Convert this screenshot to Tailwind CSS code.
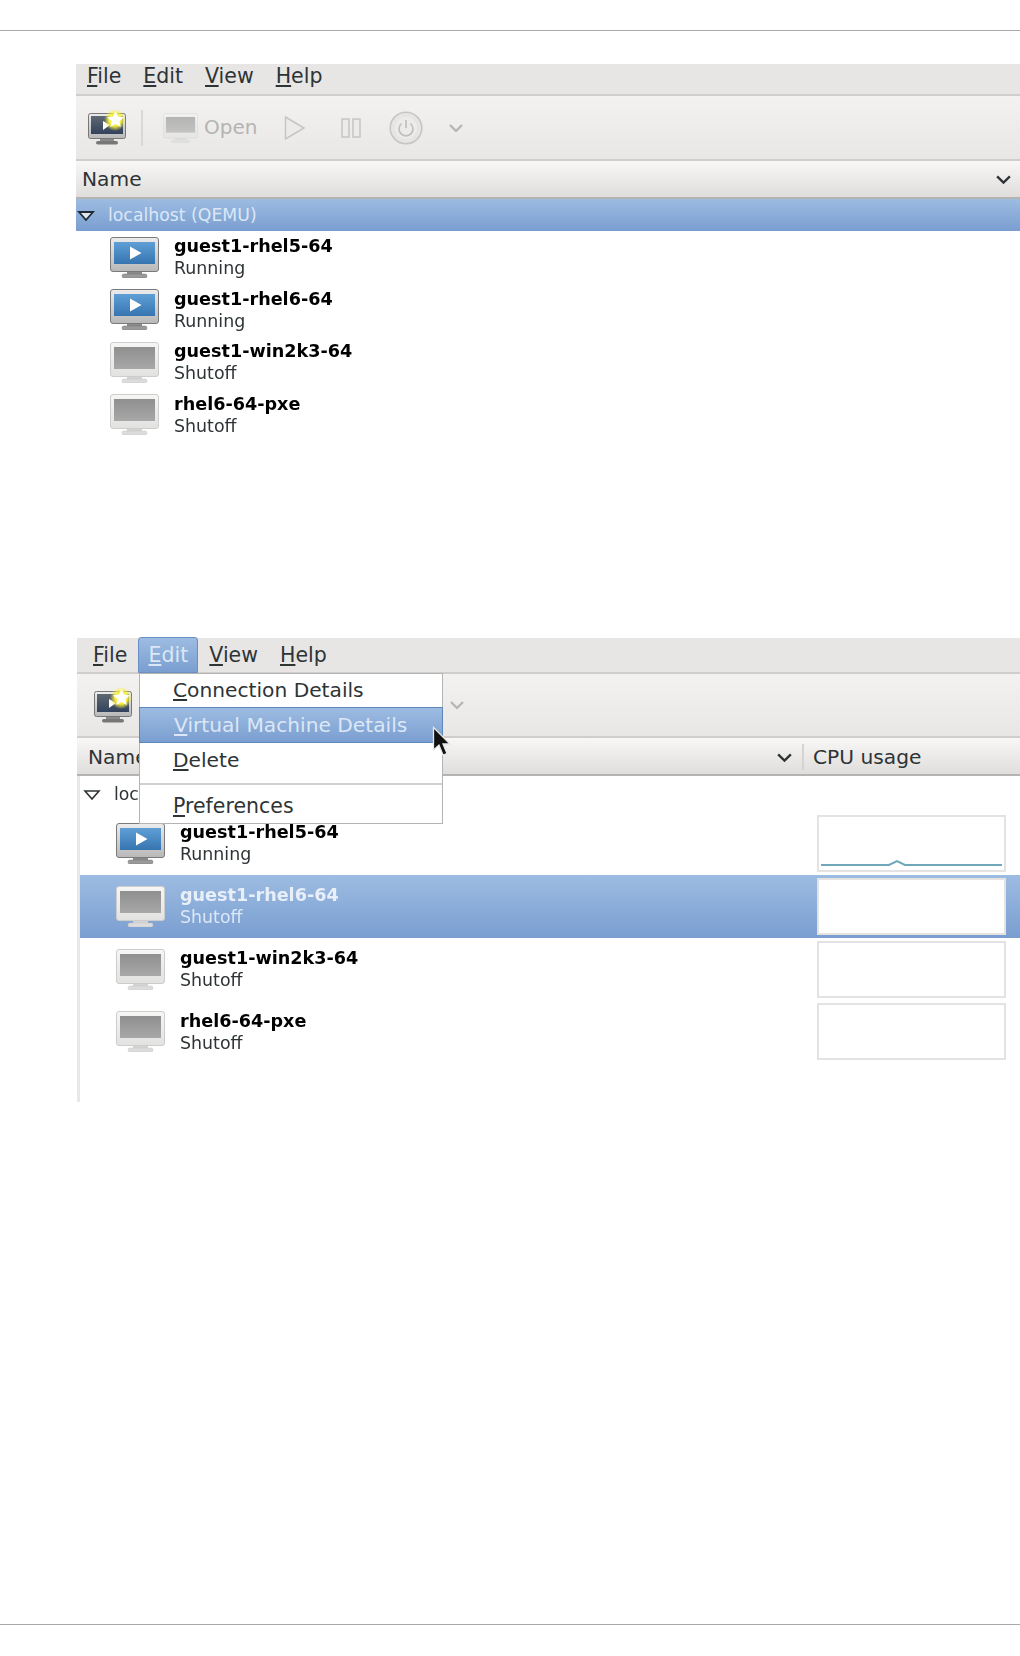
<!DOCTYPE html>
<html lang="en">
<head>
<meta charset="UTF-8">
<title>Virtual Machine Manager</title>
<script src="https://cdn.jsdelivr.net/npm/@tailwindcss/browser@4"></script>
</head>
<body class="bg-white font-['DejaVu_Sans',sans-serif] text-[#2e3436] w-[1020px] h-[1656px] overflow-hidden">

<!-- shared icons -->
<svg class="absolute w-0 h-0">
  <defs>
    <linearGradient id="blue" x1="0" y1="0" x2="0" y2="1"><stop offset="0" stop-color="#5f9fd6"/><stop offset="1" stop-color="#3675b0"/></linearGradient>
    <linearGradient id="bezelOn" x1="0" y1="0" x2="0" y2="1"><stop offset="0" stop-color="#ececec"/><stop offset="1" stop-color="#b8b8b8"/></linearGradient>
    <linearGradient id="bezelOff" x1="0" y1="0" x2="0" y2="1"><stop offset="0" stop-color="#f6f6f5"/><stop offset="1" stop-color="#e2e2e1"/></linearGradient>
    <linearGradient id="greyScreen" x1="0" y1="0" x2="0" y2="1"><stop offset="0" stop-color="#8f8f8f"/><stop offset="1" stop-color="#a8a8a8"/></linearGradient>
    <linearGradient id="dark" x1="0" y1="0" x2="0" y2="1"><stop offset="0" stop-color="#5f6873"/><stop offset="1" stop-color="#33435c"/></linearGradient>
    <radialGradient id="glow"><stop offset="0.55" stop-color="#f6ee3c"/><stop offset="1" stop-color="#f6ee3c" stop-opacity="0"/></radialGradient>
    <symbol id="vm-on" viewBox="0 0 49 41">
      <rect x="17" y="34" width="15" height="3" fill="#8a8a8a"/>
      <rect x="12" y="37" width="25" height="4" rx="2" fill="#9a9a9a" stroke="#777" stroke-width="0.5"/>
      <rect x="0.5" y="0.5" width="48" height="34" rx="2.5" fill="url(#bezelOn)" stroke="#7a7a7a"/>
      <rect x="4" y="5" width="41" height="22" fill="url(#blue)"/>
      <path d="M20 9.5 L31.5 16 L20 22.5 Z" fill="#fff"/>
    </symbol>
    <symbol id="vm-off" viewBox="0 0 49 41">
      <rect x="17" y="34" width="15" height="3" fill="#d4d4d4"/>
      <rect x="12" y="37" width="25" height="4" rx="2" fill="#dcdcdc" stroke="#c6c6c6" stroke-width="0.5"/>
      <rect x="0.5" y="0.5" width="48" height="34" rx="2.5" fill="url(#bezelOff)" stroke="#cdcdcd"/>
      <rect x="4" y="5" width="41" height="22" fill="url(#greyScreen)"/>
    </symbol>
    <symbol id="vm-new" viewBox="0 0 38 35">
      <rect x="12" y="28" width="14" height="3" fill="#8a8a8a"/>
      <rect x="8" y="31" width="22" height="3.5" rx="1.7" fill="#777"/>
      <rect x="0.5" y="3.5" width="37" height="25" rx="2" fill="url(#bezelOn)" stroke="#777"/>
      <rect x="3" y="6" width="32" height="18" fill="url(#dark)"/>
      <path d="M15 11 L22 15 L15 20 Z" fill="#fff"/>
      <circle cx="27" cy="10" r="11" fill="url(#glow)"/>
      <path d="M27.5 1 L30 6.6 L36 7.2 L31.5 11.2 L32.8 17 L27.5 14 L22.2 17 L23.5 11.2 L19 7.2 L25 6.6 Z" fill="#fff"/>
    </symbol>
    <symbol id="chev" viewBox="0 0 16 10">
      <path d="M2 2 L8 8 L14 2" fill="none" stroke="currentColor" stroke-width="2.2"/>
    </symbol>
  </defs>
</svg>

<div class="h-px bg-[#a9a9a9] mt-[30px]"></div>

<!-- first window -->
<div class="ml-[76px] mt-[33px] blur-[0.5px]">
  <div class="h-[32px] flex items-center gap-[22px] pl-[11px] pb-[5px] text-[20.5px] bg-[#e7e6e5] border-b-2 border-[#cfcecd]">
    <span><u>F</u>ile</span><span><u>E</u>dit</span><span><u>V</u>iew</span><span><u>H</u>elp</span>
  </div>
  <div class="h-[65px] flex items-center pl-[12px] bg-linear-to-b from-[#f3f2f1] to-[#e8e7e6] border-b-2 border-[#cfcecd]">
    <svg class="w-[38px] h-[35px]"><use href="#vm-new"/></svg>
    <div class="w-[2px] h-[36px] bg-[#d9d8d7] ml-[15px] mr-[20px]"></div>
    <svg class="w-[35px] h-[30px] opacity-60"><use href="#vm-off"/></svg>
    <span class="ml-[6px] pb-[2px] text-[20px] text-[#b4b4b3]">Open</span>
    <svg class="w-[22px] h-[26px] ml-[27px]" viewBox="0 0 22 26"><path d="M1.5 2 L20 13 L1.5 24 Z" fill="#ecebea" stroke="#c5c5c4" stroke-width="1.5"/></svg>
    <svg class="w-[20px] h-[20px] ml-[35px]" viewBox="0 0 20 20"><rect x="1" y="1" width="7" height="18" fill="#ecebea" stroke="#c2c2c1" stroke-width="1.4"/><rect x="12" y="1" width="7" height="18" fill="#ecebea" stroke="#c2c2c1" stroke-width="1.4"/></svg>
    <svg class="w-[34px] h-[34px] ml-[28px]" viewBox="0 0 34 34"><circle cx="17" cy="17" r="15.8" fill="#e6e5e4" stroke="#c6c6c5" stroke-width="1.6"/><circle cx="17" cy="17" r="11" fill="#ecebea"/><path d="M12.5 12.5 A7 7 0 1 0 21.5 12.5 M17 9 V17" fill="none" stroke="#bdbdbc" stroke-width="1.6"/></svg>
    <svg class="w-[16px] h-[10px] ml-[25px] text-[#b5b5b4]"><use href="#chev"/></svg>
  </div>
  <div class="h-[38px] flex items-center justify-between pl-[6px] pr-[8px] pt-[1px] text-[20.2px] bg-linear-to-b from-[#f8f7f6] to-[#dfdedd] border-b-2 border-[#b5b4b3]">
    <span>Name</span>
    <svg class="w-[17px] h-[11px] text-[#2e3436]"><use href="#chev"/></svg>
  </div>
  <div class="h-[32px] flex items-center pt-[1px] bg-linear-to-b from-[#9dbce2] to-[#7a9ed0]">
    <svg class="w-[18px] h-[10px] ml-[1px]" viewBox="0 0 18 10"><path d="M2 1 H16 L9 9 Z" fill="#dfe6ee" stroke="#1f2a36" stroke-width="1.8"/></svg>
    <span class="ml-[13px] text-[17.3px] text-[#dce7f6]">localhost (QEMU)</span>
  </div>
  <div class="h-[52.5px] flex items-center pl-[34px]">
    <svg class="w-[49px] h-[41px]"><use href="#vm-on"/></svg>
    <div class="ml-[15px] text-[17.4px] leading-[22px]"><div class="font-bold text-black text-[17.6px]">guest1-rhel5-64</div><div>Running</div></div>
  </div>
  <div class="h-[52.5px] flex items-center pl-[34px]">
    <svg class="w-[49px] h-[41px]"><use href="#vm-on"/></svg>
    <div class="ml-[15px] text-[17.4px] leading-[22px]"><div class="font-bold text-black text-[17.6px]">guest1-rhel6-64</div><div>Running</div></div>
  </div>
  <div class="h-[52.5px] flex items-center pl-[34px]">
    <svg class="w-[49px] h-[41px]"><use href="#vm-off"/></svg>
    <div class="ml-[15px] text-[17.4px] leading-[22px]"><div class="font-bold text-black text-[17.6px]">guest1-win2k3-64</div><div>Shutoff</div></div>
  </div>
  <div class="h-[52.5px] flex items-center pl-[34px]">
    <svg class="w-[49px] h-[41px]"><use href="#vm-off"/></svg>
    <div class="ml-[15px] text-[17.4px] leading-[22px]"><div class="font-bold text-black text-[17.6px]">rhel6-64-pxe</div><div>Shutoff</div></div>
  </div>
</div>

<!-- second window, Edit menu open -->
<div class="relative ml-[77px] mt-[197px] blur-[0.5px]">
  <div class="h-[36px] flex items-center pl-[16px] text-[20.5px] bg-[#e7e6e5] border-b-2 border-[#cfcecd]">
    <span><u>F</u>ile</span>
    <span class="ml-[11px] h-[36px] w-[60px] flex items-center justify-center rounded-t-[3px] bg-linear-to-b from-[#9dbce2] to-[#7a9ed0] border border-[#6a8fc2] text-[#dce7f6]"><span><u>E</u>dit</span></span>
    <span class="ml-[11px]"><u>V</u>iew</span>
    <span class="ml-[22px]"><u>H</u>elp</span>
  </div>
  <div class="h-[64px] flex items-center pl-[17px] bg-linear-to-b from-[#f3f2f1] to-[#e8e7e6] border-b-2 border-[#cfcecd]">
    <svg class="w-[38px] h-[35px]"><use href="#vm-new"/></svg>
    <svg class="w-[16px] h-[10px] ml-[317px] text-[#b5b5b4]"><use href="#chev"/></svg>
  </div>
  <div class="h-[38px] flex items-center pl-[11px] pt-[2px] text-[20.2px] bg-linear-to-b from-[#f8f7f6] to-[#dfdedd] border-b-2 border-[#b5b4b3]">
    <span>Name</span>
    <svg class="w-[17px] h-[11px] ml-auto text-[#2e3436]"><use href="#chev"/></svg>
    <div class="w-[2px] h-[26px] bg-[#d5d4d3] ml-[9px]"></div>
    <span class="w-[216px] pl-[9px]">CPU usage</span>
  </div>
  <div class="border-l-[3px] border-[#e8e8e7] h-[326px]">
    <div class="h-[36px] flex items-center pt-[1px]">
      <svg class="w-[18px] h-[10px] ml-[3px]" viewBox="0 0 18 10"><path d="M2 1 H16 L9 9 Z" fill="#fff" stroke="#2e3436" stroke-width="1.6"/></svg>
      <span class="ml-[13px] text-[17.3px]">localhost (QEMU)</span>
    </div>
    <div class="h-[62.8px] flex items-center pl-[36px] pr-[14px]">
      <svg class="w-[49px] h-[41px]"><use href="#vm-on"/></svg>
      <div class="ml-[15px] text-[17.4px] leading-[22px]"><div class="font-bold text-black text-[17.6px]">guest1-rhel5-64</div><div>Running</div></div>
      <svg class="ml-auto w-[189px] h-[57px] bg-white border-2 border-[#e4e2e2]" viewBox="0 0 185 53"><path d="M2 48 H70 L78 44 L86 48 H183" fill="none" stroke="#6fa8b8" stroke-width="2"/></svg>
    </div>
    <div class="h-[63px] flex items-center pl-[36px] pr-[14px] bg-linear-to-b from-[#9dbce2] to-[#7a9ed0]">
      <svg class="w-[49px] h-[41px]"><use href="#vm-off"/></svg>
      <div class="ml-[15px] text-[17.4px] leading-[22px] text-[#dce7f6]"><div class="font-bold text-[#e8eff9] text-[17.6px]">guest1-rhel6-64</div><div>Shutoff</div></div>
      <div class="ml-auto w-[189px] h-[57px] bg-white border-2 border-[#e4e2e2]"></div>
    </div>
    <div class="h-[62.8px] flex items-center pl-[36px] pr-[14px]">
      <svg class="w-[49px] h-[41px]"><use href="#vm-off"/></svg>
      <div class="ml-[15px] text-[17.4px] leading-[22px]"><div class="font-bold text-black text-[17.6px]">guest1-win2k3-64</div><div>Shutoff</div></div>
      <div class="ml-auto w-[189px] h-[57px] bg-white border-2 border-[#e4e2e2]"></div>
    </div>
    <div class="h-[62.8px] flex items-center pl-[36px] pr-[14px]">
      <svg class="w-[49px] h-[41px]"><use href="#vm-off"/></svg>
      <div class="ml-[15px] text-[17.4px] leading-[22px]"><div class="font-bold text-black text-[17.6px]">rhel6-64-pxe</div><div>Shutoff</div></div>
      <div class="ml-auto w-[189px] h-[57px] bg-white border-2 border-[#e4e2e2]"></div>
    </div>
  </div>

  <!-- open menu -->
  <div class="absolute left-[62px] top-[35px] w-[304px] h-[151px] bg-white border border-[#b5b4b3] text-[20.2px]">
    <div class="h-[33px] flex items-center pl-[33px]"><span><u>C</u>onnection Details</span></div>
    <div class="h-[36px] -mx-px flex items-center pl-[34px] bg-linear-to-b from-[#9dbce2] to-[#7a9ed0] border border-[#5f86bb] text-[#dce7f6]"><span><u>V</u>irtual Machine Details</span></div>
    <div class="h-[35px] flex items-center pl-[33px]"><span><u>D</u>elete</span></div>
    <div class="h-[7px] border-b-2 border-[#d2d1d0]"></div>
    <div class="h-[37px] flex items-center pl-[33px] pt-[5px] text-[20.5px]"><span><u>P</u>references</span></div>
  </div>
  <!-- mouse pointer -->
  <svg class="absolute left-[355px] top-[88px] w-[20px] h-[32px]" viewBox="0 0 20 32"><path d="M1.5 1.5 V24 L7 19 L11 29 L15 27.5 L11 18 L18 18 Z" fill="#111" stroke="#e8e8e8" stroke-width="1.3"/></svg>
</div>

<div class="h-px bg-[#a9a9a9] mt-[522px]"></div>
</body>
</html>
